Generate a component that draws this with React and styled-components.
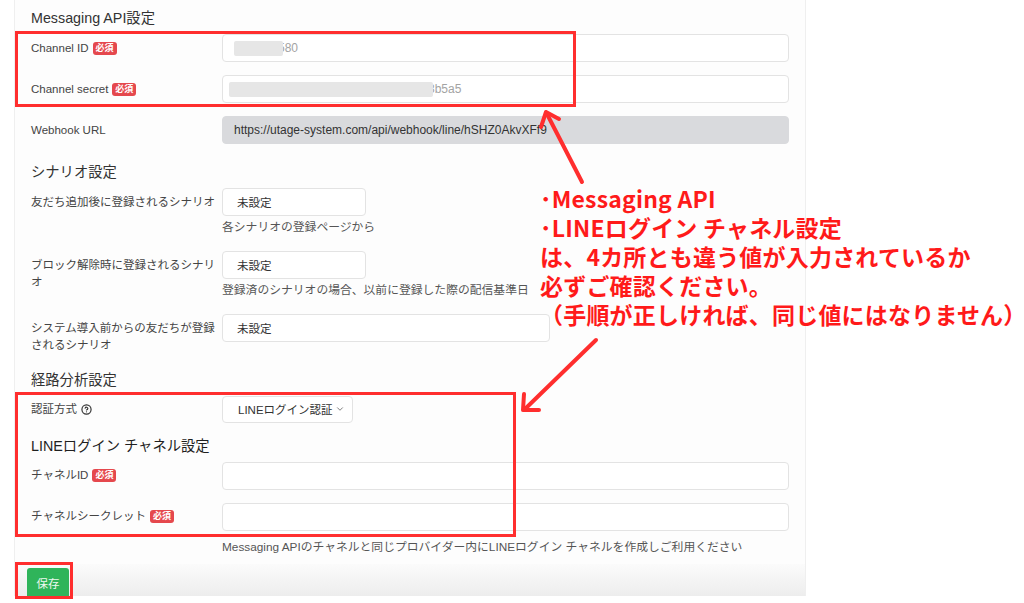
import React from 'react';
import styled, { createGlobalStyle } from 'styled-components';
import { ChevronDown, CircleHelp } from 'lucide-react';

const GlobalStyle = createGlobalStyle`
	html, body {
		margin: 0;
		padding: 0;
		background: #ffffff;
	}
	body {
		font-family: "Liberation Sans", "Noto Sans CJK JP", sans-serif;
		color: #333;
	}
`;

// 注釈の赤枠と矢印は画面の上に重ねて描く
const Page = styled.div`
	position: relative;
	width: 1024px;
	height: 603px;
	overflow: hidden;
`;

const Card = styled.div`
	box-sizing: border-box;
	margin-left: 14px;
	width: 792px;
	background: #fdfdfd;
	border-left: 1px solid #efefef;
	border-right: 1px solid #efefef;
`;

const CardBody = styled.div`
	display: flow-root;
	padding: 8px 16px 0 16px;
`;

const SectionTitle = styled.div`
	font-size: 14.3px;
	line-height: 20px;
	color: ${props => props.$strong ? '#1f1f1f' : '#333'};
	margin-top: ${props => props.$mt || 0}px;
	margin-bottom: 6px;
	white-space: nowrap;
`;

const Row = styled.div`
	display: grid;
	grid-template-columns: 191px 1fr;
	margin-bottom: ${props => props.$mb ?? 13}px;
`;

const Label = styled.div`
	font-size: 11.5px;
	line-height: 17px;
	padding-top: 5.5px;
	color: #444;
	white-space: pre-line;
`;

const Required = styled.span`
	display: inline-block;
	margin-left: 4px;
	padding: 0 3px;
	background: #e5484d;
	color: #fff;
	font-size: 9px;
	font-weight: 700;
	line-height: 13px;
	border-radius: 3px;
	vertical-align: 1px;
`;

const HelpIcon = styled.span`
	display: inline-flex;
	margin-left: 4px;
	vertical-align: -2px;
	color: #333;
`;

const Control = styled.div`
	display: flex;
	flex-direction: column;
	align-items: flex-start;
	min-width: 0;
`;

const Input = styled.div`
	box-sizing: border-box;
	display: flex;
	align-items: center;
	width: ${props => props.$w ? `${props.$w}px` : '100%'};
	height: ${props => props.$h || 28}px;
	padding: 0 ${props => props.$pl || 11}px;
	background: ${props => props.$readonly ? '#d9dadd' : '#ffffff'};
	border: 1px solid ${props => props.$readonly ? '#d9dadd' : '#e3e3e3'};
	border-radius: 4px;
	font-size: 12px;
	color: #333;
	white-space: nowrap;
	overflow: hidden;
`;

const SelectBox = styled(Input)`
	justify-content: space-between;
	padding-right: 7px;
	font-size: 11.5px;
`;

const Masked = styled.span`
	display: inline-block;
	width: ${props => props.$w}px;
	height: 15px;
	margin-left: ${props => props.$ml || 0}px;
	margin-right: -5px;
	background: #e6e6e6;
	border-radius: 2px;
	position: relative;
	z-index: 1;
`;

const FadedValue = styled.span`
	color: #a3a3a3;
`;

const Help = styled.div`
	font-size: 11.8px;
	line-height: 16px;
	color: #555;
	margin-top: ${props => props.$mt ?? 3}px;
	margin-bottom: ${props => props.$mb ?? 3}px;
	white-space: nowrap;
`;

const Footer = styled.div`
	height: 32px;
	padding: 4px 12px 0;
	box-sizing: border-box;
	overflow: hidden;
	background: linear-gradient(#fbfbfb, #ededed);
`;

const SaveButton = styled.button`
	width: 42px;
	height: 30px;
	border: none;
	border-radius: 3px;
	background: #2fb45a;
	color: #eef8f0;
	font-family: inherit;
	font-size: 11.5px;
	padding: 0;
`;

const RedFrame = styled.div`
	position: absolute;
	box-sizing: border-box;
	left: ${props => props.$x}px;
	top: ${props => props.$y}px;
	width: ${props => props.$w}px;
	height: ${props => props.$h}px;
	border: 3px solid #ff2e2e;
	pointer-events: none;
`;

const Note = styled.div`
	position: absolute;
	box-sizing: border-box;
	left: 520px;
	top: 182px;
	width: 502px;
	padding: 1.5px 0 0 20px;
	font-family: "Noto Sans CJK JP", sans-serif;
	font-weight: 700;
	font-size: 23px;
	line-height: 29px;
	color: #ff1a1a;
	white-space: nowrap;
	letter-spacing: 0.2px;
`;

const Arrows = styled.svg`
	position: absolute;
	left: 0;
	top: 0;
	pointer-events: none;
`;

const Field = ({ label, required, help, children, mb }) => (
	<Row $mb={mb}>
		<Label>
			{label}
			{required && <Required>必須</Required>}
			{help}
		</Label>
		<Control>{children}</Control>
	</Row>
);

export default function App() {
	return (
		<>
			<GlobalStyle />
			<Page>
				<Card>
					<CardBody>
						<SectionTitle>Messaging API設定</SectionTitle>
						<Field label="Channel ID" required>
							<Input>
								<Masked $w={49} />
								<FadedValue>580</FadedValue>
							</Input>
						</Field>
						<Field label="Channel secret" required>
							<Input>
								<Masked $w={204} $ml={-5} />
								<FadedValue>3b5a5</FadedValue>
							</Input>
						</Field>
						<Field label="Webhook URL">
							<Input $readonly>https://utage-system.com/api/webhook/line/hSHZ0AkvXFf9</Input>
						</Field>

						<SectionTitle $mt={18}>シナリオ設定</SectionTitle>
						<Field label="友だち追加後に登録されるシナリオ">
							<SelectBox $w={144} $pl={14}>未設定</SelectBox>
							<Help>各シナリオの登録ページから</Help>
						</Field>
						<Field label={'ブロック解除時に登録されるシナリ\nオ'}>
							<SelectBox $w={144} $pl={14}>未設定</SelectBox>
							<Help>登録済のシナリオの場合、以前に登録した際の配信基準日</Help>
						</Field>
						<Field label={'システム導入前からの友だちが登録\nされるシナリオ'}>
							<SelectBox $w={328} $pl={14}>未設定</SelectBox>
						</Field>

						<SectionTitle $mt={16}>経路分析設定</SectionTitle>
						<Field
							label="認証方式"
							help={<HelpIcon><CircleHelp size={11} strokeWidth={2.6} /></HelpIcon>}
						>
							<SelectBox $w={131} $h={27} $pl={15}>
								LINEログイン認証
								<ChevronDown size={10} color="#666" />
							</SelectBox>
						</Field>
						<SectionTitle $strong>LINEログイン チャネル設定</SectionTitle>
						<Field label="チャネルID" required>
							<Input />
						</Field>
						<Field label="チャネルシークレット" required mb={0}>
							<Input />
							<Help $mt={8} $mb={9}>
								Messaging APIのチャネルと同じプロバイダー内にLINEログイン チャネルを作成しご利用ください
							</Help>
						</Field>
					</CardBody>
					<Footer>
						<SaveButton>保存</SaveButton>
					</Footer>
				</Card>

				<RedFrame $x={15} $y={31} $w={561} $h={76} />
				<RedFrame $x={15} $y={392} $w={501} $h={145} />
				<RedFrame $x={15} $y={562} $w={58} $h={37} />

				<Note>
					<div>･Messaging API</div>
					<div>･LINEログイン チャネル設定</div>
					<div>は、4カ所とも違う値が入力されているか</div>
					<div>必ずご確認ください。</div>
					<div>（手順が正しければ、同じ値にはなりません）</div>
				</Note>

				<Arrows width="1024" height="603" viewBox="0 0 1024 603">
					<g stroke="#ff2e2e" strokeWidth="4" fill="none" strokeLinecap="round" strokeLinejoin="round">
						<path d="M582 182 L547 114" />
						<path d="M541 127 L546 112 L559 119" />
						<path d="M596 340 L525 409" />
						<path d="M524 394 L523 410 L539 410" />
					</g>
				</Arrows>
			</Page>
		</>
	);
}
